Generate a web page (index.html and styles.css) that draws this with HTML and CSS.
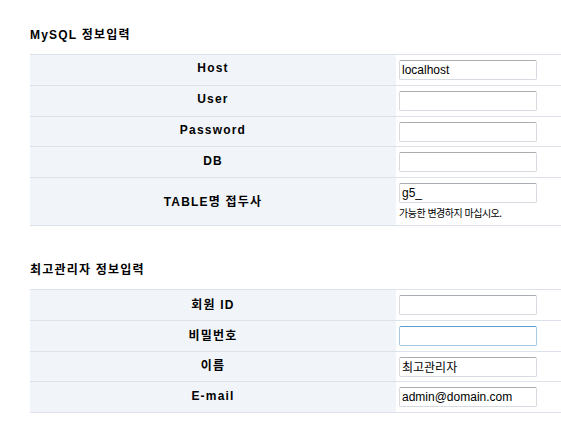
FILE: index.html
```html
<!DOCTYPE html>
<html lang="ko">
<head>
<meta charset="utf-8">
<title>설치</title>
<link rel="stylesheet" href="styles.css">
</head>
<body>
<div class="wrap">
  <section class="sec">
    <h2 class="sec-title">MySQL 정보입력</h2>
    <table class="frm">
      <tbody>
        <tr><th>Host</th><td><input class="inp" type="text" value="localhost"></td></tr>
        <tr><th>User</th><td><input class="inp" type="text"></td></tr>
        <tr><th>Password</th><td><input class="inp" type="password"></td></tr>
        <tr><th>DB</th><td><input class="inp" type="text"></td></tr>
        <tr class="tall"><th>TABLE명 접두사</th><td><input class="inp" type="text" value="g5_"><span class="help">가능한 변경하지 마십시오.</span></td></tr>
      </tbody>
    </table>
  </section>
  <section class="sec sec2">
    <h2 class="sec-title">최고관리자 정보입력</h2>
    <table class="frm">
      <tbody>
        <tr><th>회원 ID</th><td><input class="inp" type="text"></td></tr>
        <tr><th>비밀번호</th><td><input class="inp inp-focus" type="password"></td></tr>
        <tr><th>이름</th><td><input class="inp" type="text" value="최고관리자"></td></tr>
        <tr><th>E-mail</th><td><input class="inp" type="text" value="admin@domain.com"></td></tr>
      </tbody>
    </table>
  </section>
</div>
</body>
</html>
```
FILE: styles.css
```css
html, body {
  margin: 0;
  padding: 0;
  background: #fff;
}
body {
  font-family: "Liberation Sans", "Noto Sans CJK KR", sans-serif;
  font-size: 12px;
  color: #000;
  overflow: hidden;
}
.wrap {
  padding: 27px 0 0 30px;
}
.sec-title {
  margin: 0 0 11px;
  font-size: 12px;
  line-height: 16px;
  font-weight: bold;
  letter-spacing: 1.2px;
  font-family: "Liberation Sans", "Noto Sans CJK KR", sans-serif;
}
.sec2 {
  margin-top: 36px;
}
.frm {
  width: 100%;
  border-collapse: collapse;
  border-top: 1px solid #dde2ea;
}
.frm tr {
  border-bottom: 1px solid #dde2ea;
}
.frm th {
  width: 366px;
  padding: 0 0 3px;
  background: #f1f4f9;
  text-align: center;
  font-weight: bold;
  font-size: 12px;
  letter-spacing: 1.2px;
  height: 29.75px;
  box-sizing: border-box;
}
.frm td {
  padding: 5px 3px 4.75px;
  vertical-align: top;
  text-align: left;
}
.tall th {
  height: 46px;
}
.tall td {
  padding-top: 5px;
  padding-bottom: 5px;
}
.inp {
  display: block;
  width: 138px;
  height: 20px;
  box-sizing: border-box;
  margin: 0;
  padding: 0 2px;
  border: 1px solid #d7dbe1;
  border-top-color: #a9abb0;
  border-radius: 2px;
  font-family: "Liberation Sans", "Noto Sans CJK KR", sans-serif;
  font-size: 12px;
  color: #000;
  background: #fff;
  outline: none;
}
.inp-focus {
  border-color: #a6cbe8;
  border-top-color: #5d9ccf;
}
.help {
  display: block;
  margin-top: 3px;
  font-size: 10px;
  line-height: 14px;
  letter-spacing: -0.5px;
  font-family: "Noto Sans CJK KR", sans-serif;
}
```
